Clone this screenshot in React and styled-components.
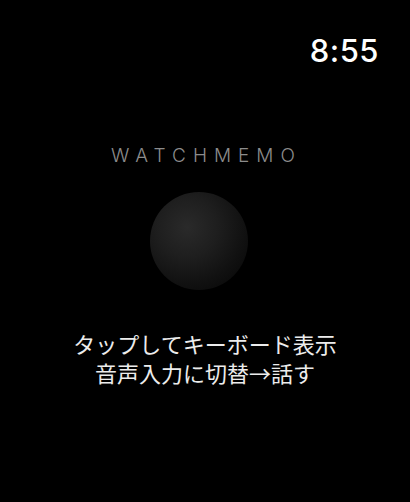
import React from 'react';
import styled, { createGlobalStyle } from 'styled-components';

const GlobalStyle = createGlobalStyle`
  html, body {
    margin: 0;
    padding: 0;
    background: #000;
  }
  * {
    box-sizing: border-box;
  }
`

const Screen = styled.div`
  width: 410px;
  height: 502px;
  background: #000;
  display: flex;
  flex-direction: column;
  font-family: Inter, "Noto Sans CJK JP", sans-serif;
  overflow: hidden;
`

const StatusBar = styled.div`
  display: flex;
  justify-content: flex-end;
  padding: 33px 31px 0 0;
`

const Time = styled.div`
  font-size: 31px;
  line-height: 36px;
  font-weight: 500;
  color: #fff;
  letter-spacing: 0.5px;
`

const Main = styled.div`
  flex: 1;
  display: flex;
  flex-direction: column;
  align-items: center;
`

const Title = styled.div`
  margin-top: 75px;
  margin-right: 4px;
  padding-left: 7px;
  font-size: 19px;
  line-height: 24px;
  font-weight: 300;
  letter-spacing: 7px;
  color: #8c8c8c;
`

const Orb = styled.div`
  width: 98px;
  height: 98px;
  margin-top: 24px;
  margin-right: 12px;
  border-radius: 50%;
  background: radial-gradient(circle at 38% 36%, #2a2a2a 0%, #1e1e1e 35%, #111 65%, #040404 100%);
`

const Hint = styled.div`
  margin-top: 39px;
  font-family: "Noto Sans CJK JP", sans-serif;
  font-size: 22px;
  line-height: 29px;
  color: #ececec;
  text-align: center;
`

export default function App() {
  return (
    <Screen>
      <GlobalStyle />
      <StatusBar>
        <Time>8:55</Time>
      </StatusBar>
      <Main>
        <Title>WATCHMEMO</Title>
        <Orb />
        <Hint>
          タップしてキーボード表示
          <br />
          音声入力に切替→話す
        </Hint>
      </Main>
    </Screen>
  );
}
